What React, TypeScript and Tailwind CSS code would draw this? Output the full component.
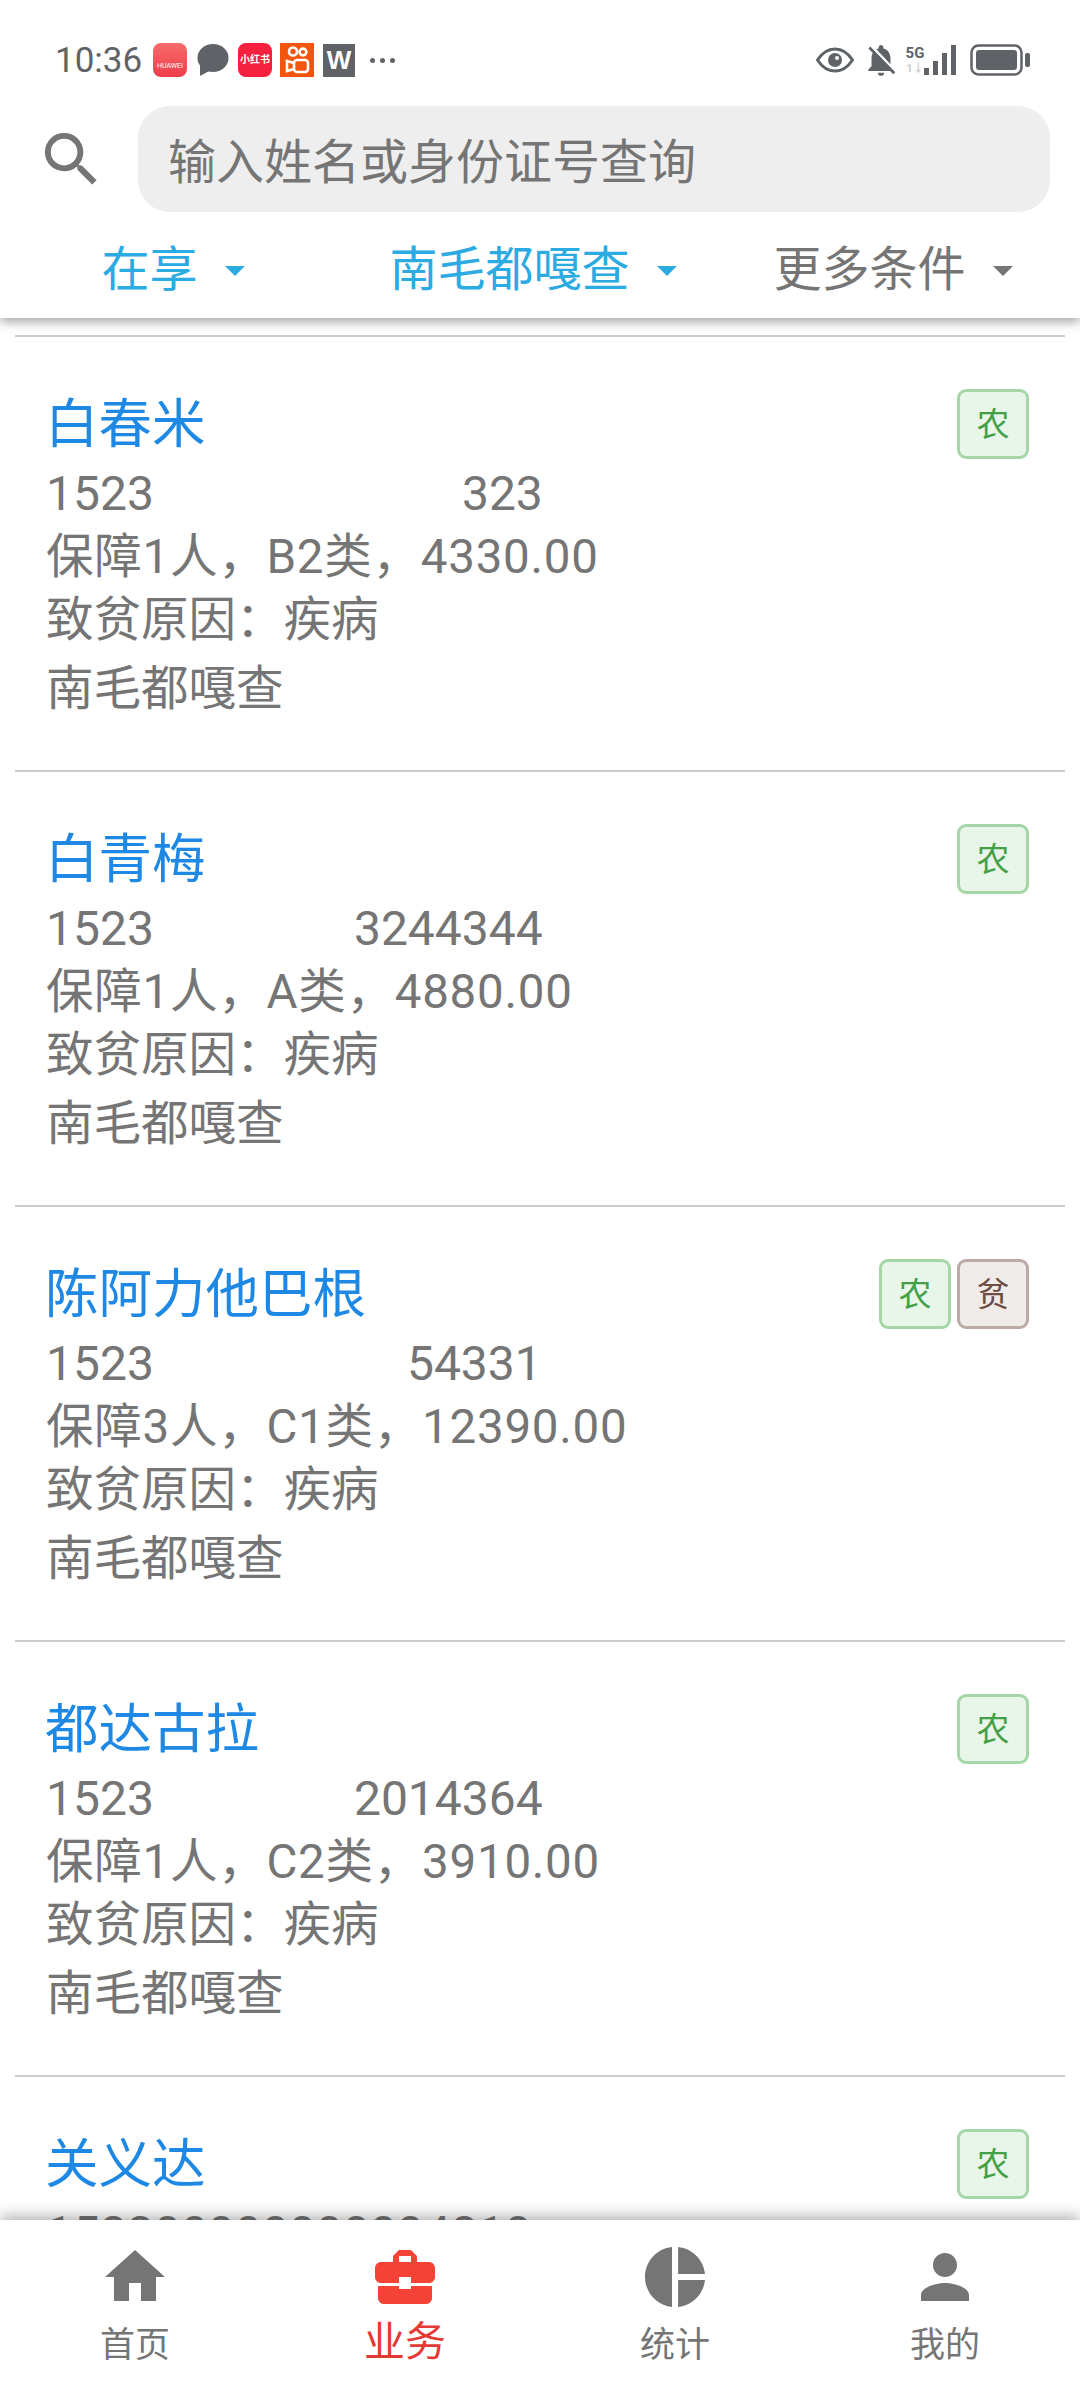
import { MdArrowDropDown, MdBusinessCenter, MdHome, MdNotificationsOff, MdPerson, MdPieChart, MdSearch } from 'react-icons/md'

const people = [
  { name: '白春米', head: '1523', tail: '323', gap: 'w-[308px]', info: '保障1人，B2类，4330.00', tags: ['农'] },
  { name: '白青梅', head: '1523', tail: '3244344', gap: 'w-[200px]', info: '保障1人，A类，4880.00', tags: ['农'] },
  { name: '陈阿力他巴根', head: '1523', tail: '54331', gap: 'w-[253px]', info: '保障3人，C1类，12390.00', tags: ['农', '贫'] },
  { name: '都达古拉', head: '1523', tail: '2014364', gap: 'w-[200px]', info: '保障1人，C2类，3910.00', tags: ['农'] },
  { name: '关义达', head: '152300000000004810', tail: '', gap: 'w-0', tags: ['农'] },
]

const tabs = [
  { label: '首页', icon: MdHome },
  { label: '业务', icon: MdBusinessCenter, active: true },
  { label: '统计', icon: MdPieChart },
  { label: '我的', icon: MdPerson },
]

function StatusBar() {
  return (
    <div className="h-[106px] flex items-center justify-between pl-[55px] pr-[50px] pt-[14px] text-[#5f6368]">
      <div className="flex items-center">
        <span className="text-[35px] leading-none w-[98px]">10:36</span>
        <div className="w-[34px] h-[34px] rounded-[8px] bg-gradient-to-b from-[#f76b6b] to-[#ee3b4a] flex items-end justify-center pb-[7px] text-white text-[7px] leading-none">HUAWEI</div>
        <svg className="w-[32px] h-[34px] ml-[10px]" viewBox="0 0 32 34" fill="#5f6368">
          <ellipse cx="16" cy="15" rx="15.5" ry="14" />
          <path d="M3 20 L3 33 L14 27 Z" />
        </svg>
        <div className="w-[34px] h-[34px] ml-[9px] rounded-[8px] bg-[#f5213f] flex items-center justify-center text-white text-[10px] leading-none font-bold whitespace-nowrap">小红书</div>
        <svg className="w-[34px] h-[34px] ml-[8px]" viewBox="0 0 34 34">
          <rect width="34" height="34" fill="#f4550d" />
          <g fill="none" stroke="#fff" strokeWidth="2.6">
            <circle cx="13" cy="8.5" r="4" />
            <circle cx="23" cy="9" r="3.4" />
            <rect x="14" y="17" width="14" height="12" rx="3" />
            <path d="M14 20 L7 18 V28 L14 26" />
          </g>
        </svg>
        <div className="w-[32px] h-[33px] ml-[9px] bg-[#5f6368] flex items-center justify-center text-white text-[26px] leading-none font-bold font-['Liberation_Sans',sans-serif]">W</div>
        <div className="flex gap-[5px] ml-[15px]">
          <span className="w-[5px] h-[5px] rounded-full bg-[#5f6368]" />
          <span className="w-[5px] h-[5px] rounded-full bg-[#5f6368]" />
          <span className="w-[5px] h-[5px] rounded-full bg-[#5f6368]" />
        </div>
      </div>
      <div className="flex items-center">
        <svg className="w-[38px] h-[26px]" viewBox="0 0 38 26">
          <path d="M1.5 13 C7 4.5 13 2 19 2 C25 2 31 4.5 36.5 13 C31 21.5 25 24 19 24 C13 24 7 21.5 1.5 13 Z" fill="none" stroke="#5f6368" strokeWidth="3" />
          <circle cx="19" cy="13" r="7" fill="#5f6368" />
          <circle cx="21" cy="11" r="2" fill="#fff" />
        </svg>
        <MdNotificationsOff className="w-[38px] h-[38px] ml-[8px]" />
        <div className="ml-[6px] w-[18px] flex flex-col items-center">
          <span className="text-[15px] leading-[17px] font-bold">5G</span>
          <span className="text-[11px] leading-[13px] text-[#cccccc] font-bold">1↓</span>
        </div>
        <svg className="w-[33px] h-[32px]" viewBox="0 0 33 32" fill="#5f6368">
          <rect x="0" y="24" width="5" height="7" />
          <rect x="9" y="17" width="5" height="14" />
          <rect x="18" y="9" width="5" height="22" />
          <rect x="27" y="1" width="5" height="30" />
        </svg>
        <svg className="w-[60px] h-[32px] ml-[13px]" viewBox="0 0 60 32">
          <rect x="1.5" y="1.5" width="50" height="29" rx="7" fill="none" stroke="#5f6368" strokeWidth="2.5" />
          <rect x="6" y="6" width="41" height="20" rx="3" fill="#5f6368" />
          <rect x="55" y="9" width="5" height="14" rx="2" fill="#5f6368" />
        </svg>
      </div>
    </div>
  )
}

function Filter({ label, active }: { label: string; active?: boolean }) {
  return (
    <div className={`flex items-center justify-center gap-[13px] ${active ? 'text-[#2caae2]' : 'text-[#757575]'}`}>
      <span>{label}</span>
      <MdArrowDropDown className="w-[48px] h-[48px]" />
    </div>
  )
}

function Tag({ text }: { text: string }) {
  const green = text === '农'
  return (
    <div
      className={`w-[72px] h-[70px] rounded-[9px] border-[3px] flex items-center justify-center text-[33px] leading-none ${
        green ? 'border-[#a5d6a7] bg-[#e8f5e9] text-[#43a047]' : 'border-[#bcaaa4] bg-[#efebe9] text-[#6d4c41]'
      }`}
    >
      {text}
    </div>
  )
}

function PersonRow({ person }: { person: (typeof people)[number] }) {
  return (
    <div className="h-[435px] mx-[15px] border-t-2 border-[#cccccc] pt-[52px] pl-[31px] pr-[36px] flex justify-between">
      <div className="text-[47.5px] text-[#757575]">
        <div className="text-[53.5px] leading-[72px] -ml-[1px] text-[#1e88e5]">{person.name}</div>
        <div className="flex leading-[64px] text-[48px] mt-[1px]">
          <span>{person.head}</span>
          <span className={person.gap} />
          <span>{person.tail}</span>
        </div>
        {person.info && (
          <>
            <div className="leading-[64px] tracking-[0.75px] whitespace-nowrap -mt-[1px]">{person.info}</div>
            <div className="leading-[62px]">致贫原因：疾病</div>
            <div className="leading-[76px]">南毛都嘎查</div>
          </>
        )}
      </div>
      <div className="flex gap-[6px]">
        {person.tags.map((t) => (
          <Tag key={t} text={t} />
        ))}
      </div>
    </div>
  )
}

export default function App() {
  return (
    <div className="h-[2388px] w-[1080px] flex flex-col overflow-hidden bg-white font-[Roboto,'Noto_Sans_CJK_SC',sans-serif]">
      <header className="relative z-10 h-[318px] shrink-0 bg-white shadow-[0_4px_10px_rgba(0,0,0,0.35)]">
        <StatusBar />
        <div className="h-[106px] flex items-center pl-[36px] pr-[30px]">
          <MdSearch className="w-[71px] h-[71px] text-[#757575] shrink-0" />
          <input
            className="ml-[31px] w-full h-[106px] rounded-[32px] bg-[#eeeeee] pl-[30px] pt-[7px] text-[48px] outline-none placeholder:text-[#757575]"
            placeholder="输入姓名或身份证号查询"
            readOnly
          />
        </div>
        <div className="h-[106px] pt-[10px] grid grid-cols-3 text-[48px] leading-none">
          <Filter label="在享" active />
          <Filter label="南毛都嘎查" active />
          <Filter label="更多条件" />
        </div>
      </header>

      <main className="flex-1 min-h-0 overflow-hidden pt-[17px]">
        {people.map((p) => (
          <PersonRow key={p.name} person={p} />
        ))}
      </main>

      <nav className="relative z-10 h-[168px] shrink-0 grid grid-cols-4 bg-white shadow-[0_-4px_14px_rgba(0,0,0,0.3)]">
        {tabs.map((tab) => {
          const Icon = tab.icon
          return (
            <div key={tab.label} className={`flex flex-col items-center pt-[21px] ${tab.active ? 'text-[#f44336]' : 'text-[#757575]'}`}>
              <Icon className="w-[72px] h-[72px]" />
              <span className={tab.active ? 'text-[41px] leading-[48px] text-[#e53935] mt-[5px]' : 'text-[35px] leading-[48px] mt-[9px]'}>{tab.label}</span>
            </div>
          )
        })}
      </nav>
    </div>
  )
}
